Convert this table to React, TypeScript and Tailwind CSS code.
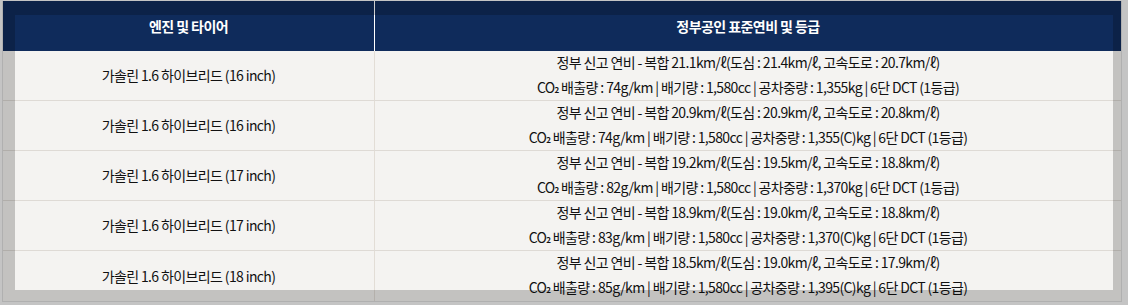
const rows = [
  { tire: "16", total: "21.1", city: "21.4", hwy: "20.7", co2: "74", weight: "1,355kg" },
  { tire: "16", total: "20.9", city: "20.9", hwy: "20.8", co2: "74", weight: "1,355(C)kg" },
  { tire: "17", total: "19.2", city: "19.5", hwy: "18.8", co2: "82", weight: "1,370kg" },
  { tire: "17", total: "18.9", city: "19.0", hwy: "18.8", co2: "83", weight: "1,370(C)kg" },
  { tire: "18", total: "18.5", city: "19.0", hwy: "17.9", co2: "85", weight: "1,395(C)kg" },
];

const App = () => {
  return (
    <div
      className="relative w-[1128px] h-[305px] overflow-hidden bg-[#f6f6f6] pl-[2px] pt-[1px] text-[#111]"
      style={{ fontFamily: '"Noto Sans CJK KR", "Noto Sans", sans-serif' }}
    >
      <div className="w-[1120px] border-x border-b border-[#dcdcdc]">
        <div className="flex h-[50px] bg-[#0f2b5b] text-white text-[14px] font-bold tracking-[-0.04em]">
          <div className="w-[372px] flex items-center justify-center border-r border-white">
            엔진 및 타이어
          </div>
          <div className="flex-1 flex items-center justify-center">
            정부공인 표준연비 및 등급
          </div>
        </div>
        {rows.map((r, i) => (
          <div
            key={i}
            className={`flex h-[50px] bg-[#f4f3f1] text-[14px] tracking-[-0.045em] ${i < rows.length - 1 ? "border-b border-[#dedad5]" : ""}`}
          >
            <div className="w-[372px] flex items-center justify-center border-r border-[#e2ddd6]">
              가솔린 1.6 하이브리드 ({r.tire} inch)
            </div>
            <div className="flex-1 flex flex-col items-center justify-center leading-[25px]">
              <p>
                정부 신고 연비 - 복합 {r.total}km/ℓ(도심 : {r.city}km/ℓ, 고속도로 : {r.hwy}km/ℓ)
              </p>
              <p>
                CO<span className="text-[8px] font-bold">2</span> 배출량 : {r.co2}g/km | 배기량 : 1,580cc | 공차중량 : {r.weight} | 6단 DCT (1등급)
              </p>
            </div>
          </div>
        ))}
      </div>
      <div className="absolute left-[15px] top-[15px] w-[1098px] h-[275px] shadow-[0_0_0_2000px_rgba(0,0,0,0.2)]" />
    </div>
  );
};

export default App;
